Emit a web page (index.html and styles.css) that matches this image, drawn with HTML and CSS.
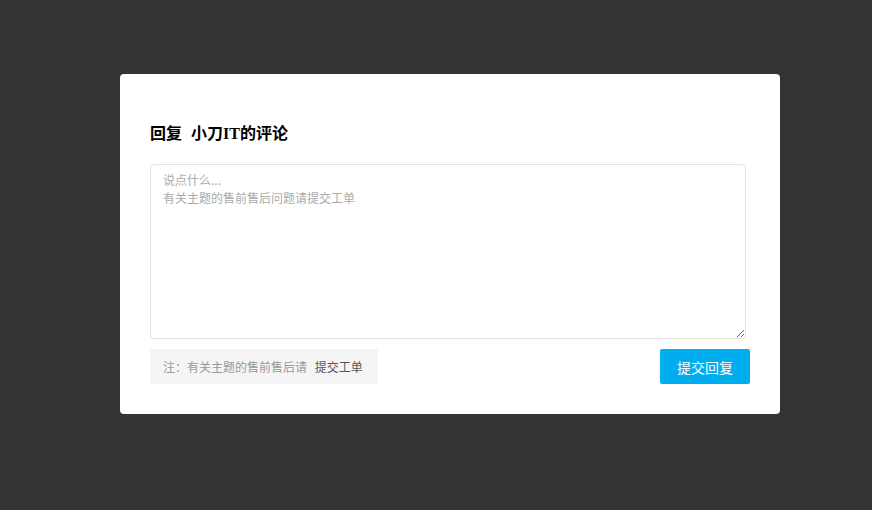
FILE: index.html
```html
<!DOCTYPE html>
<html lang="zh-CN">
<head>
<meta charset="UTF-8" />
<meta name="viewport" content="width=device-width, initial-scale=1" />
<title>回复评论</title>
<link rel="stylesheet" href="styles.css">
</head>
<body>
<div class="page">
    <div class="reply-box">
        <h3 class="reply-title">回复 <span class="reply-user">小刀IT的评论</span></h3>
        <textarea class="reply-text" placeholder="说点什么...&#10;有关主题的售前售后问题请提交工单"></textarea>
        <div class="reply-foot">
            <div class="reply-note">注：有关主题的售前售后请 <a href="#">提交工单</a></div>
            <button class="reply-btn">提交回复</button>
        </div>
    </div>
</div>
</body>
</html>
```

FILE: styles.css
```css
body{
    margin: 0;
    padding: 0;
    background-color: #333333;
    font-family: "Noto Sans CJK SC", "Liberation Sans", sans-serif;
}
.page{
    height: 510px;
    display: flex;
    justify-content: center;
    padding: 74px 0 0 28px;
    box-sizing: border-box;
}
.reply-box{
    width: 660px;
    height: 340px;
    box-sizing: border-box;
    background-color: #fff;
    border-radius: 4px;
    padding: 50px 30px 30px;
}
.reply-title{
    margin: 0 0 20px;
    height: 20px;
    line-height: 20px;
    font-size: 16px;
    font-weight: bold;
    color: #000;
    font-family: "Liberation Serif", "Noto Sans CJK SC", serif;
}
.reply-user{
    margin-left: 5px;
}
.reply-text{
    display: block;
    width: 596px;
    height: 175px;
    box-sizing: border-box;
    border: 1px solid #e3e3e3;
    border-radius: 3px;
    padding: 6px 12px;
    font-family: "Noto Sans CJK SC", sans-serif;
    font-size: 12px;
    line-height: 18px;
    color: #333;
    resize: vertical;
    outline: none;
}
.reply-text::placeholder{
    color: #aaa;
}
.reply-foot{
    display: flex;
    justify-content: space-between;
    align-items: center;
    margin-top: 10px;
}
.reply-note{
    background-color: #f5f5f5;
    border-radius: 2px;
    height: 35px;
    line-height: 35px;
    padding: 0 15px 0 13px;
    font-size: 12px;
    color: #999;
}
.reply-note a{
    margin-left: 5px;
    color: #555;
    text-decoration: none;
}
.reply-btn{
    width: 90px;
    height: 35px;
    border: none;
    border-radius: 2px;
    background-color: #00aeef;
    color: #fff;
    font-family: "Noto Sans CJK SC", sans-serif;
    font-size: 14px;
    cursor: pointer;
}
```
